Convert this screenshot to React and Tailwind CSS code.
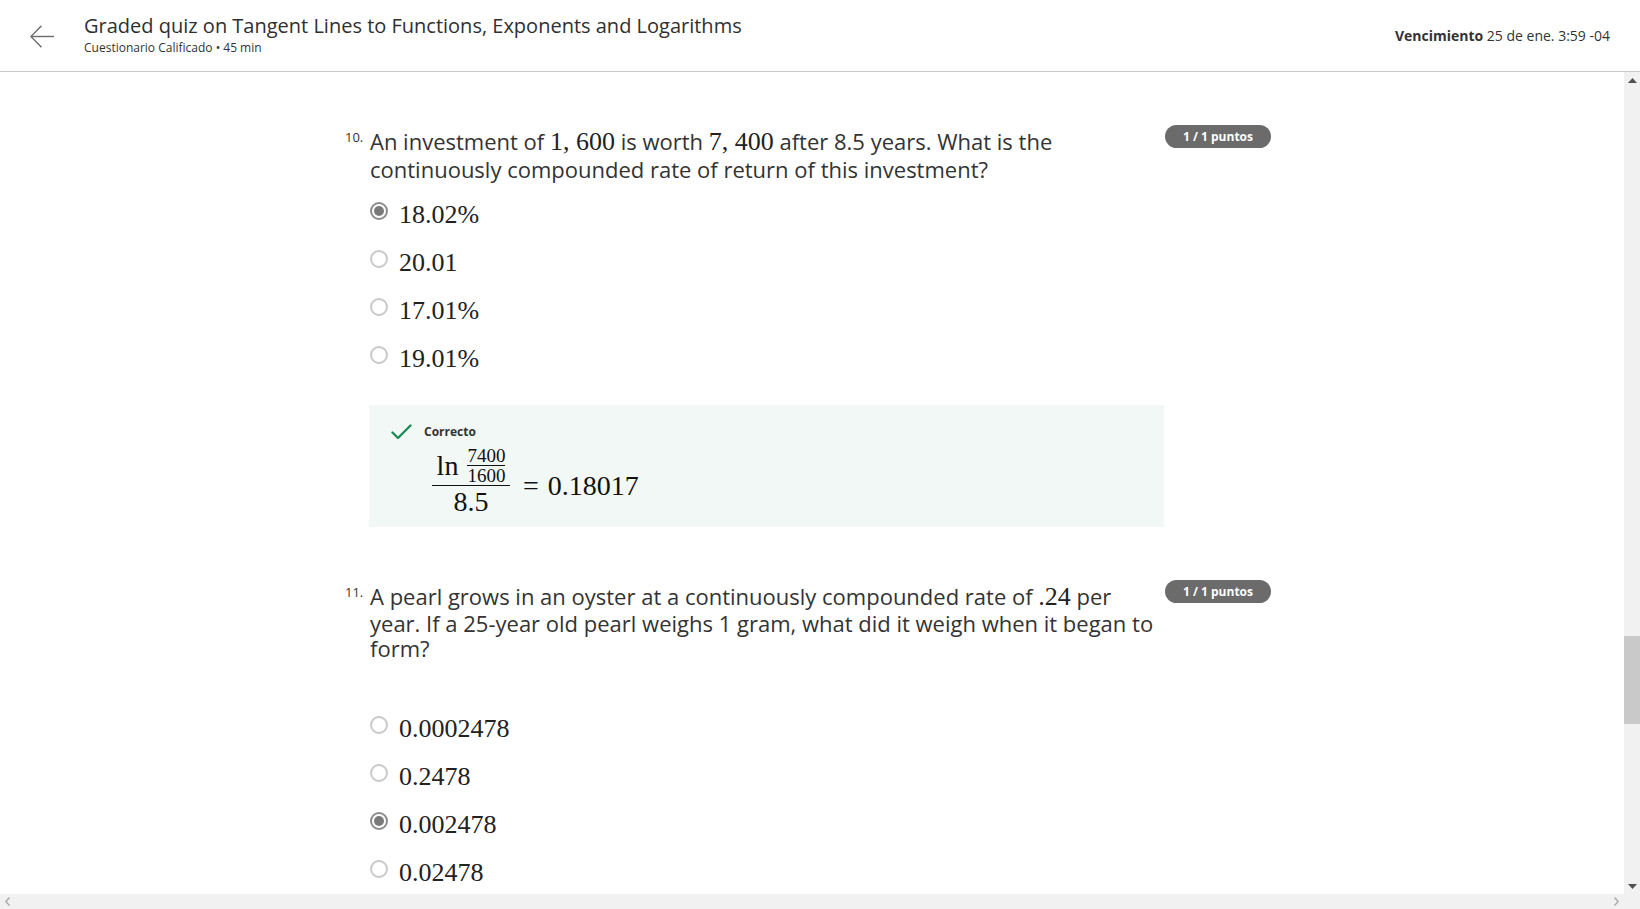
import React from "react";

function Radio({ checked }) {
  if (checked) {
    return (
      <span className="w-[18px] h-[18px] shrink-0 rounded-full border-2 border-[#8c8c8c] flex items-center justify-center mb-[9px]">
        <span className="w-[10px] h-[10px] rounded-full bg-[#7a7a7a]" />
      </span>
    );
  }
  return <span className="w-[18px] h-[18px] shrink-0 rounded-full border-2 border-[#c9c9c9] mb-[9px]" />;
}

function Option({ label, checked }) {
  return (
    <div className="h-[48px] flex items-center">
      <Radio checked={checked} />
      <span className="ml-[11px] font-['Liberation_Serif',serif] text-[26px] leading-[30px] text-[#222]">{label}</span>
    </div>
  );
}

function Badge() {
  return (
    <div className="w-[106px] h-[23px] shrink-0 rounded-full bg-[#6b6b6b] flex items-center justify-center text-white text-[12px] font-bold">
      1 / 1 puntos
    </div>
  );
}

function M({ children }) {
  return <span className="font-['Liberation_Serif',serif] text-[26px] leading-[1] text-[#222]">{children}</span>;
}

function Check() {
  return (
    <svg width="21" height="16" viewBox="0 0 21 16" fill="none">
      <polyline points="1.5,8.5 7,14 19.5,1.5" stroke="#1e8a55" strokeWidth="2.4" strokeLinecap="round" strokeLinejoin="round" />
    </svg>
  );
}

export default function App() {
  return (
    <div className="w-[1640px] h-[909px] flex flex-col overflow-hidden bg-white font-['Open_Sans',sans-serif] text-[#333]">
      <header className="h-[72px] shrink-0 border-b border-[#c9c9c9] flex items-start pr-[30px]">
        <div className="w-[84px] shrink-0 pl-[30px] pt-[25px]">
          <svg width="24" height="23" viewBox="0 0 24 23" fill="none">
            <polyline points="11.5,0.75 0.9,11.5 11.5,22.25" stroke="#6b6b6b" strokeWidth="1.4" />
            <line x1="1" y1="11.5" x2="24" y2="11.5" stroke="#6b6b6b" strokeWidth="1.4" />
          </svg>
        </div>
        <div className="flex-1 pt-[13px]">
          <div className="text-[20px] leading-[26px] text-[#2f2f2f]">Graded quiz on Tangent Lines to Functions, Exponents and Logarithms</div>
          <div className="text-[12px] leading-[16px] mt-[1px] text-[#333]">Cuestionario Calificado • 45 min</div>
        </div>
        <div className="self-center text-[14px] leading-[20px] text-[#333]">
          <span className="font-bold">Vencimiento</span> 25 de ene. 3:59 -04
        </div>
      </header>

      <div className="flex-1 flex min-h-0">
        <main className="flex-1 overflow-hidden">
          <div className="ml-[345px] w-[926px] pt-[53px]">
            {/* Question 10 */}
            <div className="flex items-start">
              <div className="w-[25px] shrink-0 text-[13px] leading-[16px] pt-[4px]">10.</div>
              <div className="w-[795px] shrink-0 pt-[2px] text-[22px] text-[#333]">
                <div className="h-[28px] leading-[28px] whitespace-nowrap">
                  An investment of <M>1, 600</M> is worth <M>7, 400</M> after 8.5 years. What is the
                </div>
                <div className="h-[28px] leading-[28px] whitespace-nowrap">continuously compounded rate of return of this investment?</div>
              </div>
              <Badge />
            </div>
            <div className="ml-[25px] mt-[8px]">
              <Option label="18.02%" checked />
              <Option label="20.01" />
              <Option label="17.01%" />
              <Option label="19.01%" />
            </div>
            <div className="ml-[24px] mt-[22px] w-[795px] h-[122px] bg-[#f2f8f5] pt-[19px]">
              <div className="flex items-center h-[16px] pl-[22px]">
                <Check />
                <span className="ml-[12px] text-[12px] font-bold text-[#333]">Correcto</span>
              </div>
              <div className="ml-[63px] mt-[6px] flex items-center font-['Liberation_Serif',serif] text-[#111]">
                <div className="flex flex-col items-stretch w-[78px]">
                  <div className="h-[39px] flex items-center justify-center">
                    <span className="text-[28px] leading-[30px]">ln</span>
                    <span className="ml-[9px] flex flex-col items-stretch">
                      <span className="text-[19px] leading-[19px] text-center">7400</span>
                      <span className="h-[1px] bg-[#111]" />
                      <span className="text-[19px] leading-[19px] text-center">1600</span>
                    </span>
                  </div>
                  <div className="h-[1px] bg-[#111]" />
                  <div className="h-[39px] text-[28px] leading-[32px] text-center">8.5</div>
                </div>
                <span className="ml-[13px] text-[28px]">=</span>
                <span className="ml-[9px] text-[28px]">0.18017</span>
              </div>
            </div>

            {/* Question 11 */}
            <div className="flex items-start mt-[53px]">
              <div className="w-[25px] shrink-0 text-[13px] leading-[16px] pt-[4px]">11.</div>
              <div className="w-[795px] shrink-0 pt-[2px] text-[22px] text-[#333]">
                <div className="h-[28px] leading-[28px] whitespace-nowrap">
                  A pearl grows in an oyster at a continuously compounded rate of <M>.24</M> per
                </div>
                <div className="h-[26px] leading-[26px] whitespace-nowrap">year. If a 25-year old pearl weighs 1 gram, what did it weigh when it began to</div>
                <div className="h-[24px] leading-[24px] whitespace-nowrap">form?</div>
              </div>
              <Badge />
            </div>
            <div className="ml-[25px] mt-[45px]">
              <Option label="0.0002478" />
              <Option label="0.2478" />
              <Option label="0.002478" checked />
              <Option label="0.02478" />
            </div>
          </div>
        </main>
        {/* vertical scrollbar */}
        <div className="w-[16px] shrink-0 bg-[#f1f1f1] flex flex-col items-center">
          <div className="h-[16px] flex items-center justify-center">
            <svg width="9" height="5" viewBox="0 0 9 5"><polygon points="0,5 4.5,0 9,5" fill="#505050" /></svg>
          </div>
          <div className="flex-1 w-full flex flex-col">
            <div className="h-[548px]" />
            <div className="h-[88px] bg-[#c9c9c9]" />
          </div>
          <div className="h-[16px] flex items-center justify-center">
            <svg width="9" height="5" viewBox="0 0 9 5"><polygon points="0,0 4.5,5 9,0" fill="#505050" /></svg>
          </div>
        </div>
      </div>

      {/* horizontal scrollbar */}
      <div className="h-[15px] shrink-0 flex">
        <div className="flex-1 bg-[#f1f1f1] flex items-center justify-between px-[5px]">
          <svg width="5" height="9" viewBox="0 0 5 9"><polyline points="4.5,0.5 0.8,4.5 4.5,8.5" fill="none" stroke="#a3a3a3" strokeWidth="1.2" /></svg>
          <svg width="5" height="9" viewBox="0 0 5 9"><polyline points="0.5,0.5 4.2,4.5 0.5,8.5" fill="none" stroke="#a3a3a3" strokeWidth="1.2" /></svg>
        </div>
        <div className="w-[16px] bg-[#f1f1f1]" />
      </div>
    </div>
  );
}
